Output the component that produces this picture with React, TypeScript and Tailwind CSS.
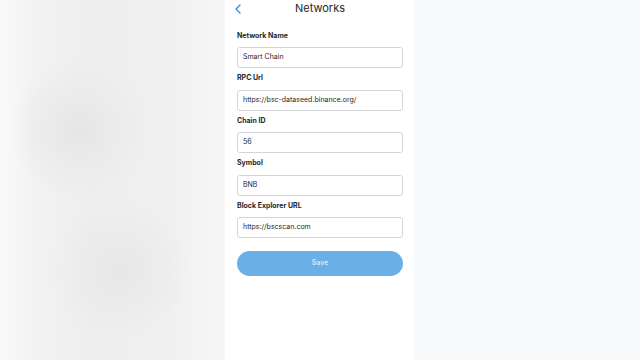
import React from "react";

const fields = [
  { label: "Network Name", value: "Smart Chain" },
  { label: "RPC Url", value: "https://bsc-dataseed.binance.org/" },
  { label: "Chain ID", value: "56" },
  { label: "Symbol", value: "BNB" },
  { label: "Block Explorer URL", value: "https://bscscan.com" },
];

export default function App() {
  return (
    <div
      className="flex w-[640px] h-[360px] overflow-hidden"
      style={{ fontFamily: "Inter, 'Noto Sans', sans-serif" }}
    >
      <div className="w-[225px] h-full bg-[#efefef] bg-[radial-gradient(circle_at_80px_130px,#e5e5e5_0px,#ebebeb_35px,transparent_70px),radial-gradient(circle_at_120px_270px,#e7e7e7_0px,transparent_70px),linear-gradient(90deg,#fafafa_0px,#f2f2f2_35px,#eeeeee_90px,#f0f0f0_170px,#f6f6f6_225px)]" />
      <div className="w-[189px] h-full bg-white flex flex-col pl-[12px] pr-[11px]">
        <div className="relative h-[17px] flex items-center justify-center">
          <svg
            className="absolute left-[-3px] top-[4px]"
            width="8"
            height="10"
            viewBox="0 0 8 10"
            fill="none"
          >
            <path d="M6 1 L2 5 L6 9" stroke="#3b8ddb" strokeWidth="1.4" strokeLinecap="round" strokeLinejoin="round" />
          </svg>
          <span className="text-[11px] text-[#24272a] leading-none">Networks</span>
        </div>
        <div className="flex flex-col gap-[3.5px] pt-[12px]">
          {fields.map((f) => (
            <div key={f.label} className="flex flex-col">
              <div className="h-[14px] mb-[4px] flex items-center text-[7px] font-bold text-[#24272a]">
                {f.label}
              </div>
              <div className="h-[21px] border border-[#d3d6d9] rounded-[3px] flex items-center pl-[5px] text-[7px] text-[#24272a]">
                {f.value}
              </div>
            </div>
          ))}
        </div>
        <div className="mt-[12.5px] h-[25px] rounded-full bg-[#6aafe6] flex items-center justify-center text-[7px] font-semibold text-[#d6e9f8]">
          Save
        </div>
      </div>
      <div className="flex-1 h-full bg-[#f7f8fa]" />
    </div>
  );
}
